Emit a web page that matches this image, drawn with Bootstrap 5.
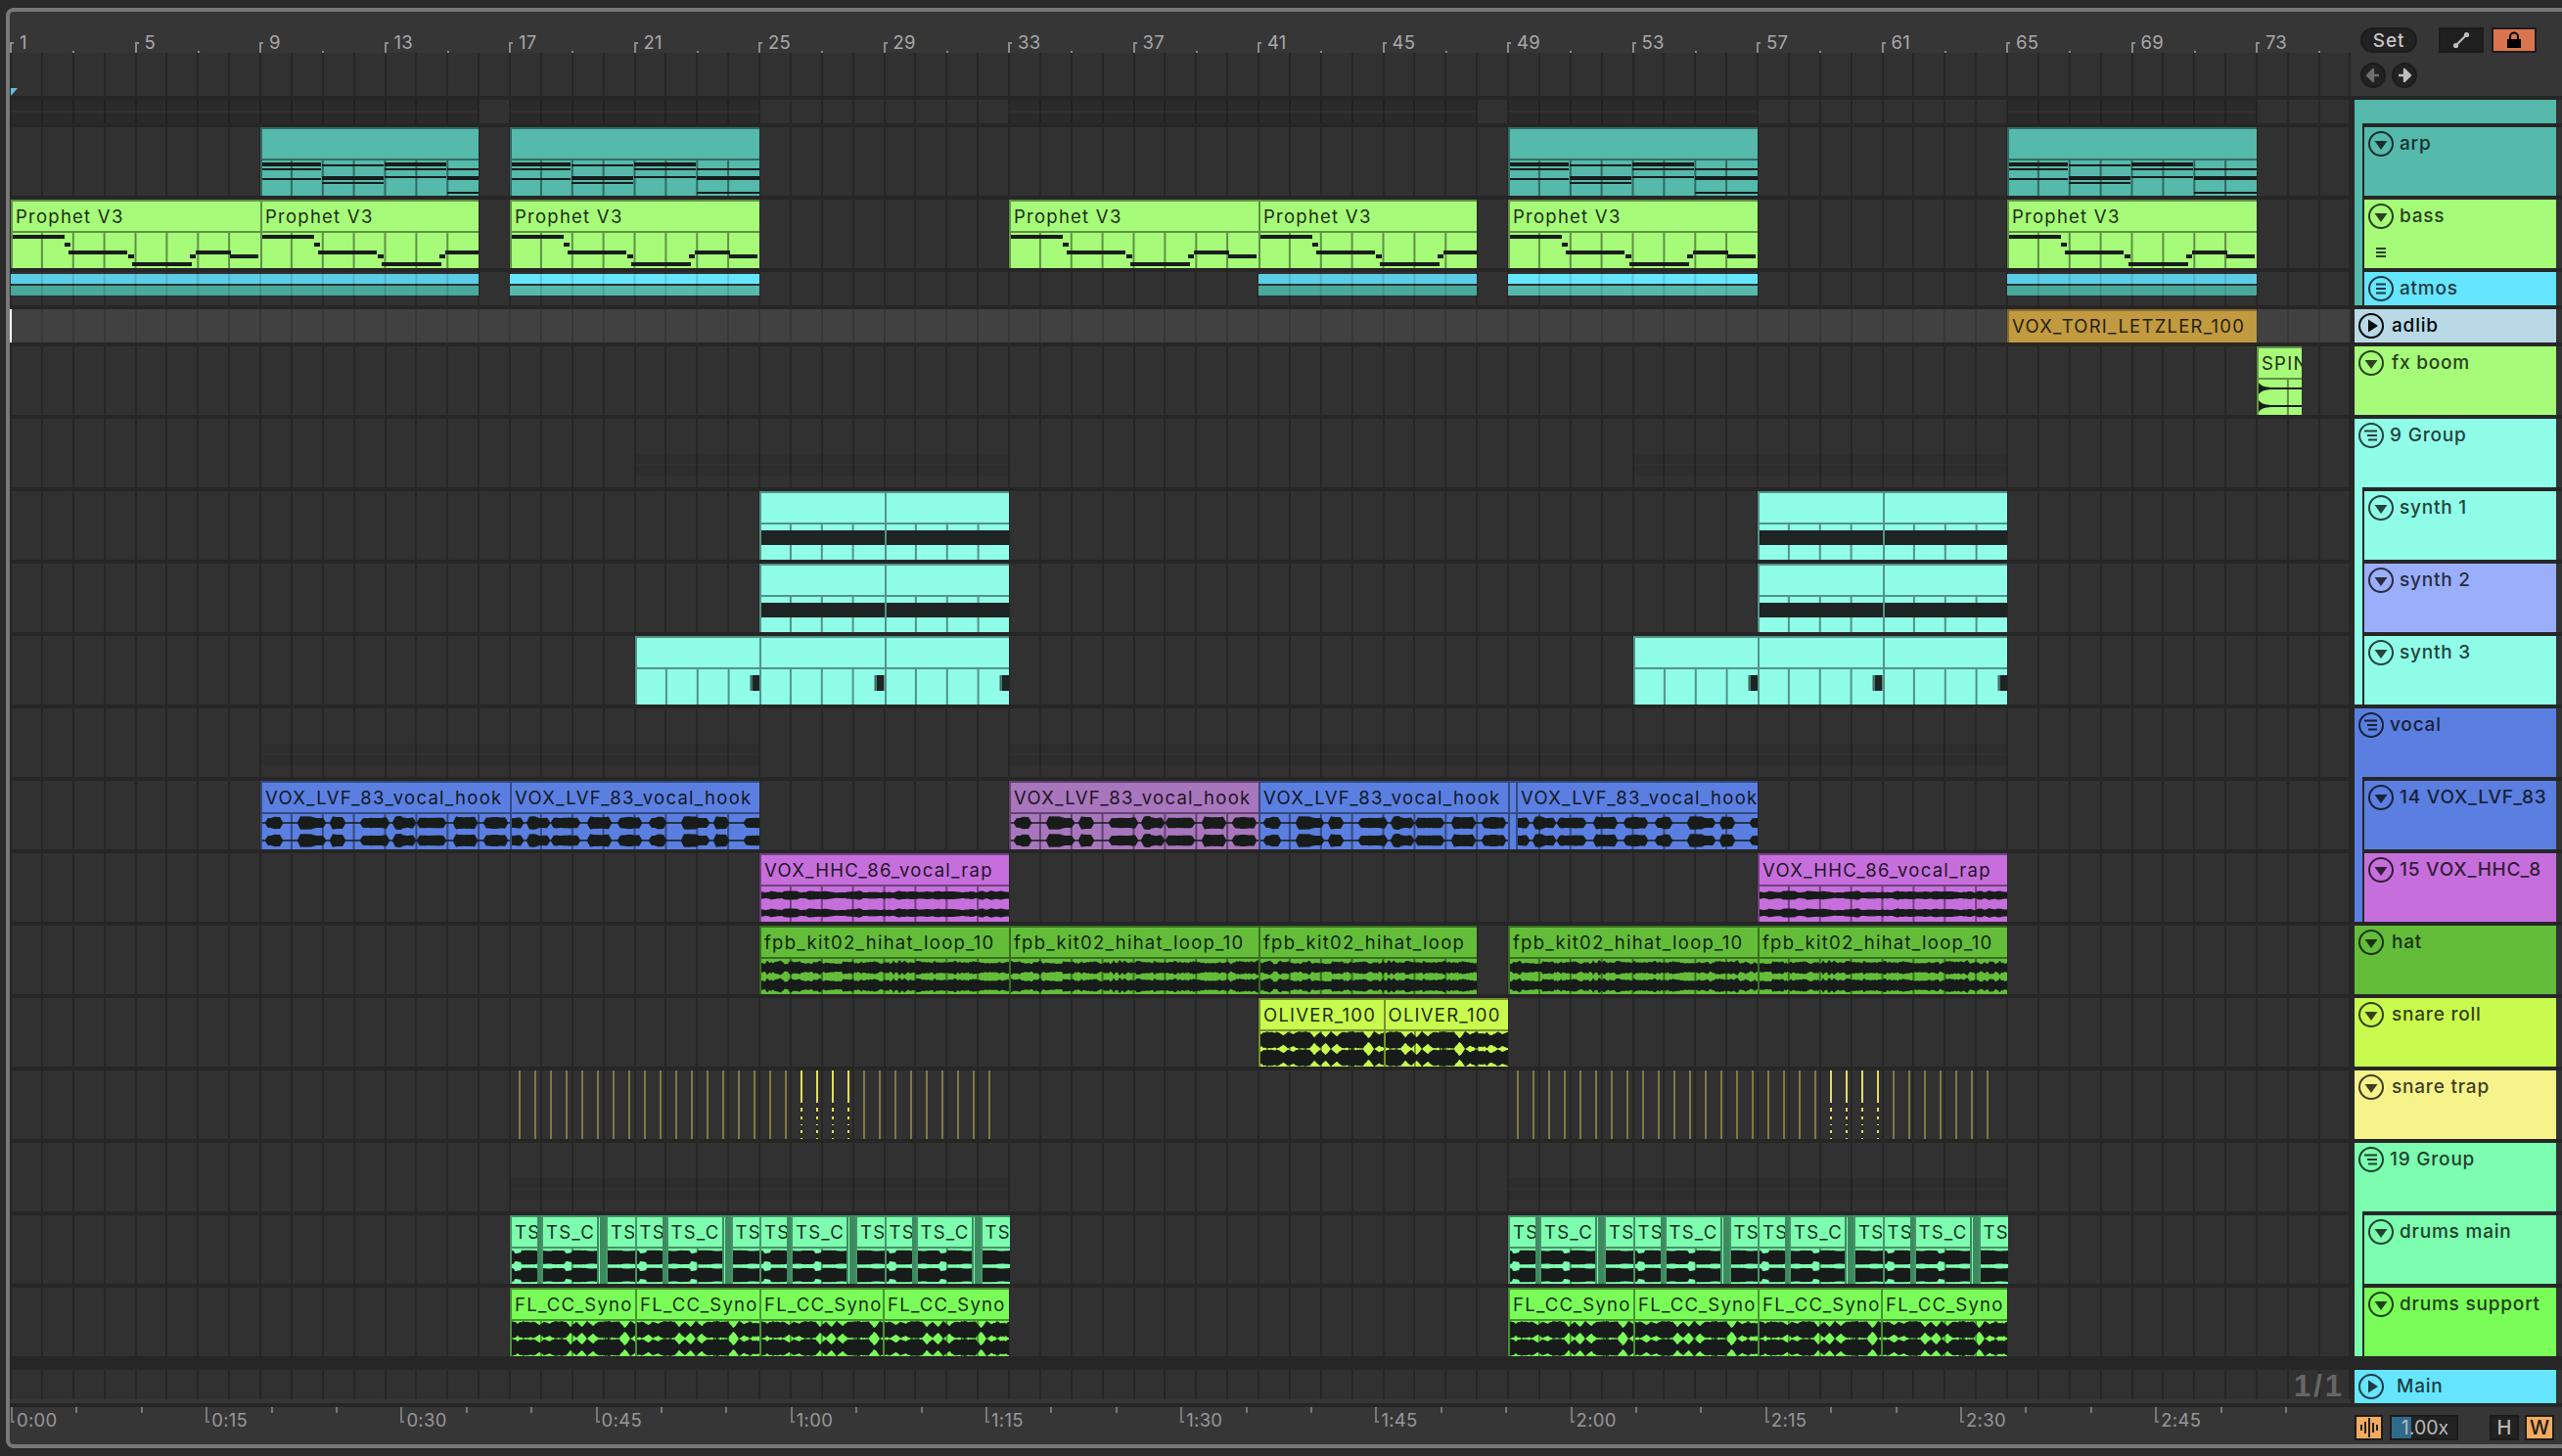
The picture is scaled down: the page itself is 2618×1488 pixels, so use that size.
<!DOCTYPE html>
<html lang="en">
<head>
<meta charset="utf-8">
<title>Arrangement</title>
<link href="https://cdn.jsdelivr.net/npm/bootstrap@5.3.0/dist/css/bootstrap.min.css" rel="stylesheet">
<style>
html,body{margin:0;background:#2a2a2a;overflow:hidden}
body{width:2618px;height:1488px;font-family:"Inter","Noto Sans",sans-serif}
.frm{margin:8px 0 0 6px;height:1472px;border:4px solid #787878;border-right:0;border-radius:8px 0 0 8px;background:#363636;position:relative;overflow:hidden}
.hdr{height:86px}
.rulr{width:2392px;height:42px;position:relative}
.looplane{width:2392px;height:44px;position:relative}
.ctrls{width:212px;padding:16px 0 0 10px}
.ctrow2{margin-top:10px}
.gap22{margin-left:22px}
.rlab{position:absolute;top:21px;font-size:18.5px;line-height:20px;color:#a8a8a8;letter-spacing:.2px}
.rtick{position:absolute;top:31px;width:4px;height:11px;border-left:2px solid #8a8a8a;border-top:2px solid #8a8a8a}
.rdot{position:absolute;top:40px;width:2px;height:2px;background:#8a8a8a}
.arr{position:relative}
.sep4{height:4px;background:#262626;position:relative;z-index:1}
.gridsvg{position:absolute;left:0;top:-44px;width:2392px;height:1376px;z-index:0;display:block}
.trk{position:relative;z-index:1;height:74px}
.trk.h28{height:28px}
.trk.h38{height:38px}
.lanew{width:2392px;height:100%;border-bottom:4px solid #262626;position:relative;flex:none}
.trk.lit .lanew{background:rgba(255,255,255,.08)}
.gut{width:4px;background:#272727;flex:none}
.thd{width:206px;flex:none;background:#272727;position:relative}
.tin{height:calc(100% - 4px);display:flex;align-items:flex-start;padding:4px 0 0 4px;color:var(--t);background:var(--c);font-weight:500;font-size:19px;letter-spacing:.8px;line-height:26px;flex-wrap:wrap;align-content:flex-start;overflow:hidden}
.thd.nst{padding-left:8px}
.thd.nst .tin{border-left:2px solid #272727}
.stp{position:absolute;left:0;top:0;width:8px;background:var(--g)}
.stp.full{height:100%}
.stp.part{height:calc(100% - 4px)}
.gsep{position:absolute;left:0;bottom:0;width:8px;height:4px;background:var(--c)}
.ico{width:26px;height:26px;flex:none;display:block}
.nm{white-space:nowrap;margin-left:6px}
.nm.top{margin-left:8px}
.nm.grp{margin-left:6px}
.nm.mn{margin-left:13px}
.mini{width:100%;padding:19px 0 0 8px;line-height:0}
.rst{width:6px;flex:none;background:#333;border-bottom:4px solid #262626}
.band{height:10px;background:#262626;position:relative;z-index:1}
.clp{position:absolute;top:0;height:100%;background:var(--c);border-top:2px solid var(--d);border-left:2px solid var(--d);overflow:hidden;color:var(--t)}
.ctt{height:30px;line-height:30px;padding-left:3px;font-size:18.5px;letter-spacing:1.25px;white-space:nowrap;overflow:hidden}
.cln{height:2px;background:var(--d)}
.cbd{display:block;width:100%;height:36px}
.shd{position:absolute;background:rgba(0,0,0,.07)}
.shd.dp{background:rgba(0,0,0,.13)}
.strip{position:absolute;top:0;height:100%;background:#3d8a60}
.atm{position:absolute;left:0;width:100%;height:10px}
.atmw{position:absolute;top:2px;height:22px;overflow:hidden}
.trns{position:absolute;top:0;height:100%;display:block}
.playh{position:absolute;left:0;top:0;width:2px;height:100%;background:#fff}
.playt{position:absolute;left:1px;top:-12px;width:0;height:0;border-top:8px solid #5ac4dc;border-right:7px solid transparent;z-index:2}
.oneone{position:absolute;right:6px;top:1px;font-family:"Liberation Sans",sans-serif;font-size:31px;font-weight:700;line-height:32px;color:#666;letter-spacing:3px}
.tbot{height:42px}
.tlane{width:2392px;position:relative;height:42px}
.tlab{position:absolute;top:3px;font-size:18.5px;line-height:20px;color:#969696;letter-spacing:.3px}
.ttick{position:absolute;top:0;width:4px;height:16px;border-left:2px solid #777;border-bottom:2px solid #777}
.tdot{position:absolute;top:0;width:2px;height:6px;background:#777}
.ub{display:block;padding:0;border-radius:0;border:2px solid #1c1c1c;height:26px;line-height:20px;font-size:18px}
.ubset{width:58px;border-radius:13px;background:#222;color:#c6c6c6;letter-spacing:.8px;font-weight:500;line-height:21px;font-size:19px}
.ubdk{background:#1f1f1f;width:46px}
.uborg{background:#d9744f;width:46px}
.ubrnd{width:26px;border-radius:13px;background:#222}
.ub svg{display:block;margin:auto}
.ubo{background:#f4ab5e;width:29px}
.rate{width:70px;background:#222;color:#b9b9b9;position:relative;font-size:19.5px;text-align:center;padding:0 0 0 2px;overflow:hidden;margin-left:7px}
.ratef{position:absolute;left:0;top:0;bottom:0;width:20px;background:#2f6a8a}
.ratet{position:relative}
.ubh{width:30px;background:#222;color:#b8b8b8;font-weight:500;font-size:20px;margin-left:32px}
.ubw{width:30px;background:#f4ab5e;color:#1b1b1b;font-weight:500;font-size:20px;margin-left:6px}
.botr{width:212px;padding-left:4px;padding-top:8px}
</style>
</head>
<body>
<div class="frm d-flex flex-column">
  <div class="hdr d-flex">
    <div class="d-flex flex-column">
      <div class="rulr" id="rul"></div>
      <div class="looplane" id="loop"></div>
    </div>
    <div class="ctrls">
      <div class="d-flex">
        <button class="btn ub ubset" type="button">Set</button>
        <button class="btn ub ubdk gap22" type="button" aria-label="expand"><svg width="20" height="20" viewBox="0 0 20 20"><path d="M5 15 15 5" stroke="#bdbdbd" stroke-width="2.2"/><circle cx="4.5" cy="15.5" r="2.6" fill="#bdbdbd"/><circle cx="15.5" cy="4.5" r="2.6" fill="#bdbdbd"/></svg></button>
        <button class="btn ub uborg ms-2" type="button" aria-label="lock"><svg width="20" height="20" viewBox="0 0 20 20"><path d="M6 9V6.5a4 4 0 0 1 8 0V9" fill="none" stroke="#000" stroke-width="2"/><rect x="3" y="9" width="14" height="9" fill="#000"/></svg></button>
      </div>
      <div class="d-flex ctrow2" style="gap:6px">
        <button class="btn ub ubrnd" type="button" aria-label="back"><svg width="20" height="20" viewBox="0 0 20 20"><path d="M16 10H8M10 4l-6 6 6 6z" fill="#6e6e6e" stroke="#6e6e6e" stroke-width="2.4" stroke-linejoin="round"/></svg></button>
        <button class="btn ub ubrnd" type="button" aria-label="forward"><svg width="20" height="20" viewBox="0 0 20 20"><path d="M4 10h8M10 4l6 6-6 6z" fill="#bdbdbd" stroke="#bdbdbd" stroke-width="2.4" stroke-linejoin="round"/></svg></button>
      </div>
    </div>
  </div>
  <div class="arr" id="arr"></div>
  <div class="tbot d-flex">
    <div class="tlane" id="tl"></div>
    <div class="botr d-flex">
      <button class="btn ub ubo" type="button" aria-label="warp"><svg width="24" height="22" viewBox="0 0 24 22"><path d="M4 8v6M8 5v12M12 1v20M16 6v10M20 8v6" stroke="#222" stroke-width="2"/></svg></button>
      <button class="btn ub rate" type="button"><span class="ratef"></span><span class="ratet">1.00x</span></button>
      <button class="btn ub ubh" type="button">H</button>
      <button class="btn ub ubw" type="button">W</button>
    </div>
  </div>
</div>
<script src="https://cdn.jsdelivr.net/npm/bootstrap@5.3.0/dist/js/bootstrap.bundle.min.js"></script>
<script>
const OX=10;
const bx=b=>11+31.875*(b-1);
function hex(c){return [1,3,5].map(i=>parseInt(c.substr(i,2),16))}
function mix(c,f,to){to=to||[0,0,0];const h=hex(c);return 'rgb('+h.map((v,i)=>Math.round(v*(1-f)+to[i]*f)).join(',')+')'}
function rng(s){return function(){s|=0;s=s+0x6D2B79F5|0;let t=Math.imul(s^s>>>15,1|s);t=t+Math.imul(t^t>>>7,61|t)^t;return((t^t>>>14)>>>0)/4294967296}}
const C={teal:'#55b9ab',bass:'#a6fb78',atm:'#66e5ff',adl:'#b9d9e6',aq:'#8ffde8',syn2:'#9aaefc',voc:'#5b7fe0',vp:'#a876bd',pk:'#c66fdc',hat:'#63bd39',rol:'#c8fb4e',trp:'#f6f38a',gr:'#7cfdb0',sup:'#7afd58',org:'#c29a3f'};
const INK='#171c1a';

/* ruler */
let h='';
for(let b=1;b<=73;b+=4){const x=bx(b)-OX;h+=`<span class="rtick" style="left:${x-1}px"></span><span class="rlab" style="left:${x+9}px">${b}</span><span class="rdot" style="left:${x+63}px"></span>`;}
document.getElementById('rul').innerHTML=h;
document.getElementById('loop').innerHTML=`<svg width="262" height="24" style="position:absolute;left:${1797-OX-1}px;top:0"><rect x="1" y="1" width="254" height="20" fill="none" stroke="#9a9a9a" stroke-width="2"/><path d="M2 3 16 11 2 20M254 3 240 11 254 20" fill="none" stroke="#9a9a9a" stroke-width="2"/></svg><span></span>`;

/* time ruler */
h='';
for(let i=0;i<=11;i++){const x=11-OX+199.2*i;const m=Math.floor(i/4),s=(i%4)*15;const l=m+':'+String(s).padStart(2,'0');
h+=`<span class="ttick" style="left:${x}px"></span><span class="tlab" style="left:${x+6}px">${l}</span>`;
h+=`<span class="tdot" style="left:${x+66.4}px"></span><span class="tdot" style="left:${x+132.8}px"></span>`;}
document.getElementById('tl').innerHTML=h;

/* waves */
const LVF=[[3,21],[36,65],[69,85],[100,130],[133,157],[158,188],[195,220],[226,251]];
const tbl=(()=>{const r=rng(77);return Array.from({length:600},()=>r())})();
function sn(x,p){const i=Math.floor(x/p),f=x/p-i,u=f*f*(3-2*f);return tbl[i%600]*(1-u)+tbl[(i+1)%600]*u}
function ampFn(kind,x){
  const n=tbl[Math.floor(x)%600],p=x%255;
  if(kind==='lvf'||kind==='lvfb'){const shift=kind==='lvfb'?18:0;const q=(p+shift)%255;for(const [a,b] of LVF){if(q>=a&&q<=b){const e=Math.min(1,Math.min(q-a,b-q)/3);return .8+e*(3.8+2.2*sn(q,7)+.4*n)}}return .7;}
  if(kind==='hhc')return 2.6+2*sn(x,5)+.5*n;
  if(kind==='hat')return 3.2+3.4*sn(x,3)+1.6*n;
  if(kind==='fl'){const d=tbl[Math.floor(x/11)%600];const ph=(x%11)/11;return 9.4-(d*d*7.5)*(1-Math.abs(ph*2-1))-n*1.2-sn(x,3)*1.2;}
  if(kind==='ts'){const q=x%64;return 6.4+.9*sn(x,6)+.2*n-(Math.abs(q-26)<4?2.4:0);}
  if(kind==='spin')return 5*Math.exp(-x/4)+.9;
  return 3;
}
function wave(kind,w,off){
  let d='';
  for(const c of [9,27]){
    let top='',bot=[];
    for(let x=0;x<=w;x+=1){const a=ampFn(kind,x+off);top+=(top?'L':'M')+x+' '+(c-a).toFixed(1);bot.push('L'+x+' '+(c+a).toFixed(1));}
    d+=top+bot.reverse().join('')+'Z';
  }
  return d;
}
function barLines(a,b,col){
  let s='';
  for(let k=1;k<=76;k++){const x=bx(k)-a-2;if(x>1&&x<b-a-3){s+=`<rect x="${(x-1).toFixed(1)}" y="0" width="2" height="36" fill="${col}"/>`}}
  return s;
}
const NB=[[1,54,240,4],[55,6,248,4],[59,60,256,4],[120,6,260,4],[124,61,268,4],[183,6,260,4],[189,36,256,4],[224,29,260,4]];
const NA=[[1,61,166,4],[1,61,172,2],[1,61,182,2],[63,63,168,2],[63,63,180,4],[63,63,186,2],[127,63,166,4],[127,63,172,2],[127,63,180,2],[191,64,172,2],[191,64,180,4],[191,64,196,2]];
function notes(list,y0,off,w){return list.map(n=>{const x=n[0]-off;return (x+n[1]<=0||x>=w)?'':`<rect x="${x}" y="${n[2]-y0}" width="${n[1]}" height="${n[3]}" fill="${INK}"/>`}).join('')}

function clip(a,b,c,title,inner,opt){
  opt=opt||{};
  const d=opt.d||mix(c,.42),t=mix(c,.82);
  const bars=barLines(a,b,d);
  return `<div class="clp" style="left:${a-OX}px;width:${b-a}px;--c:${c};--d:${d};--t:${t}"><div class="ctt">${title||''}</div><div class="cln"></div><svg class="cbd" viewBox="0 0 ${b-a-2} 36" preserveAspectRatio="none">${bars}${inner||''}</svg></div>`;
}
function wclip(a,b,c,title,kind,off){
  return clip(a,b,c,title,`<path d="${wave(kind,b-a,off||0)}" fill="${INK}"/>`);
}
function shades(sp,top,hh,cl){
  cl=cl||'';
  return sp.map(([a,b])=>`<div class="shd ${cl}" style="left:${a-OX}px;width:${b-a}px;top:${top}px;height:${hh/2-1}px"></div><div class="shd ${cl}" style="left:${a-OX}px;width:${b-a}px;top:${top+hh/2+1}px;height:${hh/2-1}px"></div>`).join('');
}
const B1=bx(1),B9=bx(9),B16=bx(16),B17=bx(17),B25=bx(25),B33=bx(33),B41=bx(41),B48=bx(48),B49=bx(49),B57=bx(57),B65=bx(65),B73=bx(73);

/* lane contents */
const L={};
L.top=`<div class="playt"></div>`+shades([[B1,B16],[B17,B25],[B33,B48],[B49,B57],[B65,B73]],0,24,'dp');
function arp(a,b){return clip(a,b,C.teal,'',notes(NA,164,2,b-a));}
L.arp=[[B9,B16],[B17,B25],[B49,B57],[B65,B73]].map(([a,b])=>arp(a,b)).join('');
function bass(a,b,t){return clip(a,b,C.bass,t,notes(NB,238,2,b-a));}
L.bass=[[B1,B9],[B9,B16],[B17,B25],[B33,B41],[B41,B48],[B49,B57],[B65,B73]].map(([a,b])=>bass(a,b,'Prophet V3')).join('');
function atm(a,b,muted){const c1=muted?'#5ccde6':'#66e5ff',c2=muted?'#4aa99d':'#55b9ab';let bars='';for(let k=1;k<=76;k++){const x=bx(k)-a;if(x>2&&x<b-a-1)bars+=`<rect x="${x-1}" y="0" width="2" height="22" fill="rgba(0,0,0,.12)"/>`}
return `<div class="atmw" style="left:${a-OX}px;width:${b-a}px"><div class="atm" style="top:0;background:${c1}"></div><div class="atm" style="top:12px;background:${c2}"></div><svg class="trns" width="${b-a}" height="22" style="left:0">${bars}</svg></div>`}
L.atmos=atm(B1,B16,1)+atm(B17,B25,0)+atm(B41,B48,1)+atm(B49,B57,0)+atm(B65,B73,1);
L.adlib=`<div class="playh"></div><div class="clp" style="left:${B65-OX}px;width:${B73-B65}px;--c:${C.org};--d:${mix(C.org,.3)};--t:${mix(C.org,.8)}"><div class="ctt">VOX_TORI_LETZLER_100</div></div>`;
L.fx=wclip(B73,B73+46,C.bass,'SPIN','spin');
L.g9=shades([[bx(21),B33],[bx(53),B65]],36,22);
function syn(a,b){return clip(a,b,C.aq,'',`<rect x="0" y="6" width="${b-a}" height="15" fill="#1d2423"/>`)}
L.s1=[[B25,bx(29)],[bx(29),B33],[B57,bx(61)],[bx(61),B65]].map(([a,b])=>syn(a,b)).join('');
L.s2=L.s1;
function syn3(a,b){return clip(a,b,C.aq,'',`<rect x="${b-a-10}" y="6" width="8" height="16" fill="#1d2423"/><rect x="${b-a-12}" y="6" width="2" height="16" fill="#3d6a64"/>`)}
L.s3=[[bx(21),B25],[B25,bx(29)],[bx(29),B33],[bx(53),B57],[B57,bx(61)],[bx(61),B65]].map(([a,b])=>syn3(a,b)).join('');
L.voc=shades([[B9,B25],[B33,B65]],36,22);
const LT='VOX_LVF_83_vocal_hook',LT2='VOX_LVF_83_vocal_hook',HT='VOX_HHC_86_vocal_rap';
L.v14=wclip(B9,B17,C.voc,LT,'lvf',0)+wclip(B17,B25,C.voc,LT2,'lvfb',100)+wclip(B33,B41,C.vp,LT,'lvf',0)+wclip(B41,B49,C.voc,LT,'lvf',0)+`<div class="clp" style="left:${B49-OX}px;width:8px;--c:${C.voc};--d:${mix(C.voc,.42)};--t:#000"><div class="ctt"></div><div class="cln"></div></div>`+wclip(B49+8,B57,C.voc,LT,'lvfb',100);
L.v15=wclip(B25,B33,C.pk,HT,'hhc')+wclip(B57,B65,C.pk,HT,'hhc');
const FT='fpb_kit02_hihat_loop_10',FT2='fpb_kit02_hihat_loop';
L.hat=wclip(B25,B33,C.hat,FT,'hat')+wclip(B33,B41,C.hat,FT,'hat',30)+wclip(B41,B48,C.hat,FT2,'hat',10)+wclip(B49,B57,C.hat,FT,'hat',50)+wclip(B57,B65,C.hat,FT,'hat',70);
L.roll=wclip(B41,bx(45),C.rol,'OLIVER_100','fl',5)+wclip(bx(45),B49,C.rol,'OLIVER_100','fl',40);
function trap(a,br){let s='';for(let i=0;i<32;i++){const x=9+i*16;if(i>=br&&i<br+4){s+=`<rect x="${x}" y="0" width="2" height="70" fill="#e0dc62"/>`;for(const yy of [33,42,50,56,64])s+=`<rect x="${x}" y="${yy}" width="2" height="5" fill="#2a2a22"/>`}else if(x<505)s+=`<rect x="${x}" y="0" width="2" height="70" fill="#7d7945"/>`}
return `<svg class="trns" width="512" height="70" viewBox="0 0 512 70" style="left:${a-OX}px">${s}</svg>`}
L.trap=trap(B17,18)+trap(B49,20);
L.g19=shades([[B17,B33],[B49,B65]],36,22);
function tsGroup(base){
  let s=`<div class="strip" style="left:${base-OX}px;width:128px"></div>`;
  s+=wclip(base,base+28,C.gr,'TS','ts',20);
  s+=wclip(base+32,base+89,C.gr,'TS_C','ts',0);
  s+=`<div class="clp" style="left:${base+89-OX}px;width:3px;--c:${C.gr};--d:#3d8a60;--t:#000"></div>`;
  s+=wclip(base+98,base+128,C.gr,'TS','ts',30);
  return s;
}
L.main=[B17,B17+127.5,B25,B25+127.5,B49,B49+127.5,B57,B57+127.5].map(tsGroup).join('');
const FLT='FL_CC_Syno';
L.sup=[[B17,B17+128],[B17+128,B25],[B25,B25+126],[B25+126,B33],[B49,B49+128],[B49+128,B57],[B57,B57+126],[B57+126,B65]].map(([a,b],i)=>wclip(a,b,C.sup,FLT,'fl',i%2*17)).join('');
L.mainT=`<span class="oneone">1/1</span>`;

/* heads */
const IC={
 fold:`<svg class="ico" viewBox="0 0 26 26"><circle cx="13" cy="13" r="12" fill="none" stroke="currentColor" stroke-width="2"/><path d="M6.5 10h13L13 19z" fill="currentColor"/></svg>`,
 list:`<svg class="ico" viewBox="0 0 26 26"><circle cx="13" cy="13" r="12" fill="none" stroke="currentColor" stroke-width="2"/><path d="M8 8.5h10M8 13h10M8 17.5h10" stroke="currentColor" stroke-width="2"/></svg>`,
 grp:`<svg class="ico" viewBox="0 0 26 26"><circle cx="13" cy="13" r="12" fill="none" stroke="currentColor" stroke-width="2"/><path d="M6 8.5h13M9 13h10M10 17.5h9" stroke="currentColor" stroke-width="2"/></svg>`,
 play:`<svg class="ico" viewBox="0 0 26 26"><circle cx="13" cy="13" r="12" fill="none" stroke="currentColor" stroke-width="2"/><path d="M10 6.5v13L20 13z" fill="currentColor"/></svg>`
};
const T=[
 {h:'h28',c:C.teal,lane:L.top,ic:'',n:'',ghead:1},
 {c:C.teal,lane:L.arp,ic:'fold',n:'arp',g:C.teal,lvl:1},
 {c:C.bass,lane:L.bass,ic:'fold',n:'bass',g:C.teal,lvl:1,mini:1},
 {h:'h38',c:C.atm,lane:L.atmos,ic:'list',n:'atmos',g:C.teal,lvl:1,last:1},
 {h:'h38',c:C.adl,lane:L.adlib,ic:'play',n:'adlib',lit:1,dark:1},
 {c:C.bass,lane:L.fx,ic:'fold',n:'fx boom'},
 {c:C.aq,lane:L.g9,ic:'grp',n:'9 Group',ghead:1},
 {c:C.aq,lane:L.s1,ic:'fold',n:'synth 1',g:C.aq,lvl:1},
 {c:C.syn2,lane:L.s2,ic:'fold',n:'synth 2',g:C.aq,lvl:1},
 {c:C.aq,lane:L.s3,ic:'fold',n:'synth 3',g:C.aq,lvl:1,last:1},
 {c:C.voc,lane:L.voc,ic:'grp',n:'vocal',ghead:1},
 {c:C.voc,lane:L.v14,ic:'fold',n:'14 VOX_LVF_83',g:C.voc,lvl:1},
 {c:C.pk,lane:L.v15,ic:'fold',n:'15 VOX_HHC_8',g:C.voc,lvl:1,last:1},
 {c:C.hat,lane:L.hat,ic:'fold',n:'hat'},
 {c:C.rol,lane:L.roll,ic:'fold',n:'snare roll'},
 {c:C.trp,lane:L.trap,ic:'fold',n:'snare trap'},
 {c:C.gr,lane:L.g19,ic:'grp',n:'19 Group',ghead:1},
 {c:C.gr,lane:L.main,ic:'fold',n:'drums main',g:C.gr,lvl:1},
 {c:C.sup,lane:L.sup,ic:'fold',n:'drums support',g:C.gr,lvl:1,last:1}
];
let out=`<svg class="gridsvg" viewBox="0 0 2392 1376" shape-rendering="crispEdges"><rect width="2392" height="1376" fill="#313131"/>`;
for(let k=1;k<=76;k++){const x=Math.round(bx(k)-OX-1);out+=`<rect x="${k==76?2390:x}" y="0" width="2" height="1376" fill="#262626"/>`}
out+=`</svg><div class="sep4"></div>`;
function row(t){
  const cls='trk d-flex '+(t.h||'')+(t.lit?' lit':'');
  const tc=t.dark?'#06090b':mix(t.c,.74);
  let head='';
  const icon=t.ic?IC[t.ic]:'';
  const nmc=t.ic==='grp'?'nm grp':(t.lvl?'nm':'nm top');
  const name=t.n?`<span class="${nmc}">${t.n}</span>`:'';
  const mini=t.mini?`<div class="mini"><svg width="10" height="10" viewBox="0 0 10 10"><path d="M0 1h10M0 5h10M0 9h10" stroke="currentColor" stroke-width="1.8"/></svg></div>`:'';
  if(t.lvl){
    head=`<div class="thd nst" style="--c:${t.c};--t:${tc};--g:${t.g}"><span class="stp ${t.last?'part':'full'}"></span><div class="tin">${icon}${name}${mini}</div></div>`;
  } else {
    head=`<div class="thd" style="--c:${t.c};--t:${tc}"><div class="tin">${icon}${name}</div>${t.ghead?'<span class="gsep"></span>':''}</div>`;
  }
  return `<div class="${cls}"><div class="lanew">${t.lane}</div><div class="gut"></div>${head}<div class="rst"></div></div>`;
}
T.forEach(t=>{out+=row(t)});
out+=`<div class="band"></div>`;
out+=row({h:'h38',c:C.atm,lane:'',ic:'play',n:'Main'}).replace('nm top','nm mn').replace('<div class="lanew">','<div class="lanew">'+L.mainT);
document.getElementById('arr').innerHTML=out;
</script>
</body>
</html>
